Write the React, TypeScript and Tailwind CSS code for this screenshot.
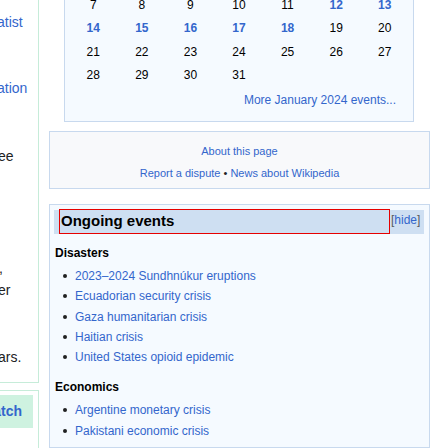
const link = "text-[#3366cc]";

const calendar: { d: number; on?: boolean }[][] = [
  [{ d: 7 }, { d: 8 }, { d: 9 }, { d: 10 }, { d: 11 }, { d: 12, on: true }, { d: 13, on: true }],
  [{ d: 14, on: true }, { d: 15, on: true }, { d: 16, on: true }, { d: 17, on: true }, { d: 18, on: true }, { d: 19 }, { d: 20 }],
  [{ d: 21 }, { d: 22 }, { d: 23 }, { d: 24 }, { d: 25 }, { d: 26 }, { d: 27 }],
  [{ d: 28 }, { d: 29 }, { d: 30 }, { d: 31 }],
];

function Bullet({ children }: { children: React.ReactNode }) {
  return (
    <li className="flex items-center h-[20.25px]">
      <span className="w-1 h-1 rounded-full bg-[#202122] ml-[9px] mr-2" />
      <span className={link}>{children}</span>
    </li>
  );
}

export default function App() {
  return (
    <div
      className="w-[448px] h-[448px] overflow-hidden bg-white flex text-[#202122]"
      style={{ fontFamily: '"Liberation Sans", Arial, sans-serif' }}
    >
      {/* Left column (cropped) */}
      <div className="w-[39px] shrink-0 flex flex-col">
        <div className="h-[396px] border-r border-b border-[#c6ecd9] text-sm leading-4 whitespace-nowrap">
          <div className={`mt-[14px] -ml-[3px] ${link}`}>atist</div>
          <div className={`mt-[50px] -ml-[3px] ${link}`}>ation</div>
          <div className="mt-[52px] -ml-[2px]">ee</div>
          <div className="mt-[96px] -ml-[5px]">
            <span className={link}>r</span>,
          </div>
          <div className="mt-[6px] -ml-[2px]">er</div>
          <div className="mt-[51px] -ml-[2px]">ars.</div>
        </div>
        <div className="mt-[7px] h-[60px] border-t border-r border-[#c6ecd9] pt-1">
          <div className="w-[33px] h-[33px] bg-[#cef2e0] flex items-center justify-end overflow-hidden">
            <span className={`text-sm font-bold ${link} mr-[11px] whitespace-nowrap`}>atch</span>
          </div>
        </div>
      </div>

      {/* Main column */}
      <div className="ml-[10px] w-[381px] shrink-0 flex flex-col">
        {/* Calendar */}
        <div className="ml-[15px] w-[350px] -mt-5 border border-[#c8d9ee] bg-[#f5faff] pt-3 px-1 pb-3.5">
          <div className="flex flex-col">
            {calendar.map((row, i) => (
              <div key={i} className="grid grid-cols-7 h-[23.5px] items-center text-xs">
                {row.map((c) => (
                  <div
                    key={c.d}
                    className={`text-center ${c.on ? `font-bold ${link}` : "text-black"}`}
                  >
                    {c.d}
                  </div>
                ))}
              </div>
            ))}
          </div>
          <div className={`mt-1.5 text-right pr-[13px] text-xs leading-[14px] ${link}`}>
            More January 2024 events...
          </div>
        </div>

        {/* About box */}
        <div className="mt-[9px] h-[61px] border border-[#c8d9ee] bg-[#f8f9fb] flex flex-col items-center text-[11px] leading-[14px] pt-3">
          <div className={link}>About this page</div>
          <div className="mt-2 whitespace-nowrap">
            <span className={link}>Report a dispute</span>
            <span> • </span>
            <span className={link}>News about Wikipedia</span>
          </div>
        </div>

        {/* Ongoing events */}
        <div className="mt-[15px] h-[260px] border border-[#c8d9ee] bg-[#f5faff] px-1 pt-[5px]">
          <div className="flex h-6 w-[370px] bg-[#cedff2]">
            <div className="ml-[5px] w-[331px] h-[25px] -mt-px border border-[#e60000] flex items-center pl-px">
              <span className="text-[15px] font-bold text-black">Ongoing events</span>
            </div>
            <div className="ml-px text-xs leading-4 pt-0.5 text-[#54595d]">
              [<span className={link}>hide</span>]
            </div>
          </div>
          <div className="mt-[11px] pl-px text-xs font-bold text-black">Disasters</div>
          <ul className="mt-[5px] text-xs">
            <Bullet>2023–2024 Sundhnúkur eruptions</Bullet>
            <Bullet>Ecuadorian security crisis</Bullet>
            <Bullet>Gaza humanitarian crisis</Bullet>
            <Bullet>Haitian crisis</Bullet>
            <Bullet>United States opioid epidemic</Bullet>
          </ul>
          <div className="mt-3 pl-px text-xs font-bold text-black">Economics</div>
          <ul className="mt-[5px] text-xs">
            <Bullet>Argentine monetary crisis</Bullet>
            <Bullet>Pakistani economic crisis</Bullet>
          </ul>
        </div>
      </div>
    </div>
  );
}
